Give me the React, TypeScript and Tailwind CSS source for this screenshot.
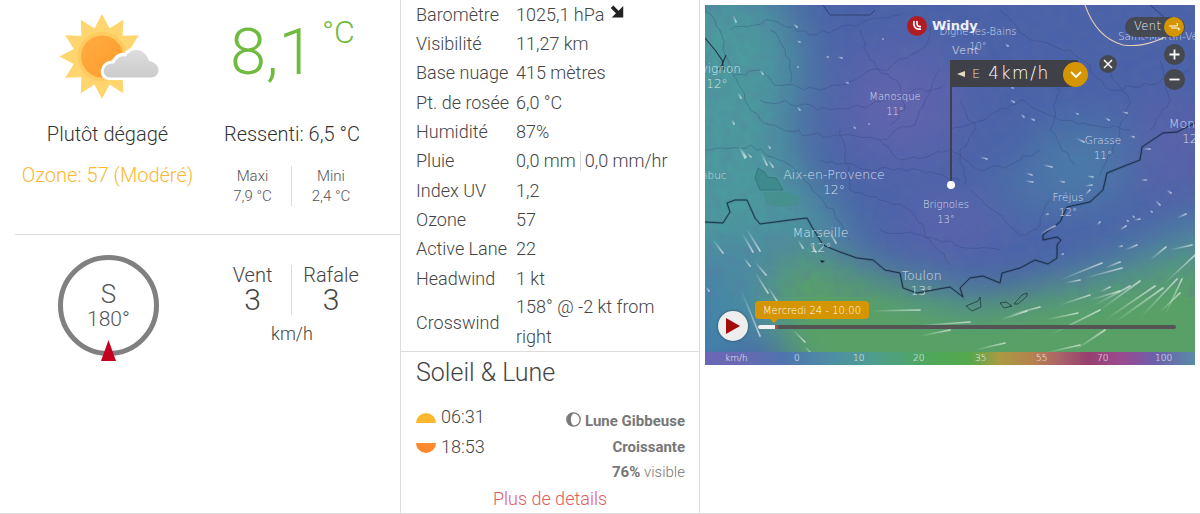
import React from "react";

const sunRays = Array.from({ length: 12 }, (_, i) => i * 30);

function WeatherIcon() {
  return (
    <svg width="120" height="92" viewBox="40 11 120 92" className="block">
      <defs>
        <linearGradient id="orange" x1="0" y1="0" x2="1" y2="1">
          <stop offset="0" stopColor="#ffad40" />
          <stop offset="1" stopColor="#ff9a2e" />
        </linearGradient>
        <linearGradient id="cloud" x1="0" y1="0" x2="0" y2="1">
          <stop offset="0" stopColor="#dddddd" />
          <stop offset="1" stopColor="#cbcbcb" />
        </linearGradient>
      </defs>
      {sunRays.map((a) => (
        <polygon key={a} points="102,14 92,33 112,33" fill="#ffd56f" transform={`rotate(${a} 102 56.5)`} />
      ))}
      <circle cx="102" cy="56.5" r="26" fill="#ffd56f" />
      <circle cx="102" cy="56.5" r="24.5" fill="#ffcb5f" />
      <circle cx="102" cy="56.5" r="21" fill="url(#orange)" />
      <path
        d="M110 78.5 C103 78.5 101 73 103 69 C104 64 109 61.5 113 62 C116 55 122 54 125 54.5 C129 47 144 45 150 60 C156 61 159.5 66 159.5 70 C159.5 75 156 78.5 151 78.5 Z"
        fill="#fff"
        stroke="#fff"
        strokeWidth="3"
      />
      <path
        d="M111 77.5 C105 77.5 103 73 104 69.5 C105 65 110 63 114 63.5 C117 56.5 123 55.5 126 56.5 C130 48 144 46 149 61 C155 62 158.5 66 158.5 70 C158.5 74.5 155 77.5 151 77.5 Z"
        fill="url(#cloud)"
      />
    </svg>
  );
}

const streaks: [number, number, number, number][] = [
  [733, 15, 736, 22], [793, 24, 797, 27], [797, 41, 800, 42], [826, 56, 828, 57], [838, 57, 842, 58],
  [760, 70, 763, 74], [797, 66, 798, 67], [738, 93, 741, 98], [797, 107, 800, 110], [732, 120, 734, 124],
  [853, 126, 855, 128], [868, 123, 869, 124], [768, 145, 770, 148], [742, 150, 746, 157], [747, 153, 751, 157],
  [739, 146, 745, 158], [761, 153, 767, 165], [768, 160, 773, 167], [845, 82, 848, 83], [882, 38, 883, 39],
  [1005, 44, 1008, 46], [1010, 87, 1013, 88], [1010, 100, 1014, 102], [1021, 114, 1024, 117], [1030, 118, 1034, 120],
  [1075, 113, 1078, 114], [1105, 118, 1109, 120], [1122, 112, 1127, 113], [1076, 138, 1084, 142], [1130, 136, 1134, 137],
  [1143, 149, 1150, 149], [1043, 165, 1052, 167], [980, 157, 987, 159], [1026, 173, 1032, 175], [1025, 181, 1033, 182],
  [1059, 181, 1064, 182], [1087, 176, 1093, 177], [1085, 186, 1092, 185], [1141, 180, 1146, 180],
  [742, 233, 753, 252], [746, 228, 760, 251], [744, 258, 750, 266], [755, 262, 766, 275], [755, 272, 768, 293],
  [768, 287, 777, 301], [713, 240, 723, 253], [706, 287, 709, 291], [741, 290, 760, 336], [793, 330, 805, 342],
  [805, 347, 812, 354], [829, 231, 836, 243], [798, 240, 803, 248], [810, 243, 816, 252],
  [1065, 283, 1080, 280], [1040, 234, 1055, 226], [1060, 280, 1102, 263], [1085, 278, 1122, 268], [1100, 310, 1140, 281],
  [1060, 305, 1090, 295], [1095, 305, 1130, 286], [1100, 292, 1110, 287], [1115, 322, 1163, 288], [1105, 320, 1155, 286],
  [1140, 318, 1177, 279], [1165, 315, 1182, 279], [1160, 312, 1180, 293], [1165, 283, 1195, 255], [1170, 250, 1192, 245],
  [1150, 260, 1166, 247], [1125, 250, 1137, 245], [1105, 268, 1120, 262], [1090, 300, 1120, 291],
  [1010, 315, 1040, 307], [1000, 320, 1027, 311], [1045, 320, 1078, 313], [1050, 335, 1100, 310], [1075, 350, 1105, 330],
  [915, 326, 970, 322], [870, 311, 920, 310], [920, 336, 950, 330], [1045, 353, 1080, 345], [975, 350, 1005, 343],
  [1120, 230, 1126, 226], [1132, 215, 1134, 217], [1155, 200, 1160, 205], [1126, 220, 1128, 221], [1150, 210, 1152, 212],
  [1177, 218, 1186, 214], [1134, 220, 1140, 219], [1167, 190, 1171, 193], [1097, 225, 1100, 222], [1085, 195, 1090, 190],
  [1118, 247, 1122, 246], [1045, 215, 1048, 214], [1061, 255, 1063, 254],
];

let seed = 7;
function rnd() {
  seed = (seed * 16807) % 2147483647;
  return seed / 2147483647 - 0.5;
}
function jag(pts: number[][]) {
  let d = `M${pts[0][0]} ${pts[0][1]}`;
  for (let i = 1; i < pts.length; i++) {
    const [a, b] = pts[i - 1];
    const [c, e] = pts[i];
    const n = Math.max(2, Math.round(Math.hypot(c - a, e - b) / 6));
    for (let k = 1; k <= n; k++) {
      const t = k / n;
      const j = k === n ? 0 : 5;
      d += ` L${(a + (c - a) * t + rnd() * j).toFixed(1)} ${(b + (e - b) * t + rnd() * j).toFixed(1)}`;
    }
  }
  return d;
}

const rivers = [
  [[705, 5], [720, 30], [725, 55], [733, 75], [760, 70], [775, 85], [820, 90], [850, 82], [870, 70], [890, 68], [920, 50], [935, 25]],
  [[733, 75], [745, 100], [770, 125], [810, 135], [850, 135], [880, 140], [895, 130], [915, 125], [925, 100], [940, 70]],
  [[760, 100], [800, 105], [830, 110], [870, 105], [905, 95], [945, 85]],
  [[705, 150], [750, 145], [790, 165], [812, 190], [835, 215], [850, 240]],
  [[840, 130], [845, 155], [850, 190], [880, 200], [910, 210], [930, 240], [950, 265]],
  [[880, 140], [900, 160], [950, 150], [980, 170], [1010, 165], [1040, 150]],
  [[950, 130], [990, 115], [1020, 100], [1060, 120], [1090, 125], [1130, 130]],
  [[1000, 10], [1030, 40], [1070, 50], [1110, 90], [1150, 85], [1190, 70]],
  [[970, 190], [1000, 215], [1020, 235], [1040, 225], [1050, 200]],
  [[730, 30], [770, 20], [810, 35], [850, 25], [900, 15]],
  [[820, 160], [870, 170], [920, 170], [960, 180]],
  [[880, 230], [920, 235], [955, 245], [1000, 250]],
  [[860, 30], [870, 60], [900, 85], [905, 110], [890, 125]],
  [[960, 100], [975, 130], [960, 150], [965, 185]],
  [[1030, 60], [1060, 90], [1050, 130], [1075, 165]],
  [[1100, 60], [1130, 100], [1120, 135], [1100, 175]],
  [[770, 30], [790, 60], [790, 85]],
  [[1160, 60], [1170, 100], [1150, 130]],
].map(jag);

const coast =
  "705,222 723,223 730,212 727,203 735,200 747,200 755,218 760,224 790,220 807,218 815,232 823,245 840,252 857,258 873,260 885,270 900,273 903,288 917,293 933,290 950,287 963,297 960,288 970,278 983,276 1000,283 1002,273 1020,268 1035,260 1048,264 1057,258 1057,245 1061,240 1057,237 1043,240 1043,235 1060,222 1067,207 1090,202 1103,190 1107,173 1127,165 1140,160 1142,147 1163,133 1177,132 1195,123";

const labels: { x: number; y: number; name: string; temp: string; size: string }[] = [
  { x: 895, y: 96, name: "Manosque", temp: "11°", size: "text-[10px]" },
  { x: 834, y: 174, name: "Aix-en-Provence", temp: "12°", size: "text-[12.5px]" },
  { x: 946, y: 204, name: "Brignoles", temp: "13°", size: "text-[10px]" },
  { x: 820.5, y: 232, name: "Marseille", temp: "12°", size: "text-[12.5px]" },
  { x: 921.5, y: 275, name: "Toulon", temp: "13°", size: "text-[12.5px]" },
  { x: 1068, y: 197, name: "Fréjus", temp: "12°", size: "text-[10.5px]" },
  { x: 1103, y: 140, name: "Grasse", temp: "11°", size: "text-[10.5px]" },
  { x: 717, y: 69, name: "Avignon", temp: "12°", size: "text-[12px]" },
  { x: 1193, y: 123, name: "Monaco", temp: "12°", size: "text-[12.5px]" },
  { x: 978, y: 31, name: "Digne-les-Bains", temp: "10°", size: "text-[10px]" },
  { x: 1172, y: 36, name: "Saint-Martin-Vésubie", temp: "4°", size: "text-[10.5px]" },
];

function MapArt() {
  return (
    <svg viewBox="705 5 490 360" width="490" height="360" className="absolute inset-0">
      <defs>
        <filter id="b1" x="-50%" y="-50%" width="200%" height="200%"><feGaussianBlur stdDeviation="24" /></filter>
        <filter id="b2" x="-50%" y="-50%" width="200%" height="200%"><feGaussianBlur stdDeviation="20" /></filter>
        <filter id="noise" x="0" y="0" width="100%" height="100%">
          <feTurbulence type="fractalNoise" baseFrequency="0.09" numOctaves="3" seed="4" />
          <feColorMatrix values="0 0 0 0 0.12  0 0 0 0 0.16  0 0 0 0 0.36  0 0 0 1.6 -0.55" />
        </filter>
        {streaks.map(([a, b, c, d], i) => (
          <linearGradient key={i} id={`s${i}`} gradientUnits="userSpaceOnUse" x1={a} y1={b} x2={c} y2={d}>
            <stop offset="0" stopColor="#fff" stopOpacity="0" />
            <stop offset="1" stopColor="#fff" stopOpacity="0.6" />
          </linearGradient>
        ))}
      </defs>
      <rect x="705" y="5" width="490" height="360" fill="#4a62a9" />
      <g filter="url(#b1)">
        <polygon points="660,-20 775,-20 805,60 790,130 810,190 860,240 660,280" fill="#4b9a9e" />
        <ellipse cx="900" cy="105" rx="60" ry="55" fill="#6163ae" />
        <ellipse cx="950" cy="225" rx="50" ry="22" fill="#6063ae" />
        <ellipse cx="1060" cy="190" rx="70" ry="14" fill="#4a84a8" />
        <ellipse cx="1080" cy="150" rx="50" ry="20" fill="#4884a8" />
        <ellipse cx="1175" cy="140" rx="40" ry="40" fill="#5a61aa" />
        <ellipse cx="1170" cy="195" rx="50" ry="16" fill="#5263a8" />
      </g>
      <g filter="url(#b2)">
        <polygon points="690,260 800,225 880,270 1000,295 1100,262 1230,205 1230,400 800,400 780,350 690,310" fill="#4a92a0" opacity="0.85" />
        <polygon points="790,250 880,280 960,305 1090,285 1230,245 1230,400 810,400 780,340 770,290" fill="#59a066" />
        <ellipse cx="712" cy="330" rx="26" ry="45" fill="#4288aa" />
      </g>
      <polygon points={`${coast} 1195,5 705,5`} fill="#000" filter="url(#noise)" opacity="0.28" />
      <g fill="none" stroke="#2f3d70" strokeWidth="0.6" opacity="0.5">
        {rivers.map((d) => <path key={d} d={d} />)}
      </g>
      <path d="M705 38 L715 50 L722 60 L724 70 M726 55 L722 65 L718 70" fill="none" stroke="#1f3340" strokeWidth="1.1" />
      <path d="M823 5 L830 15 L870 15 L875 10 M1150 5 L1165 18 L1172 17" fill="none" stroke="#283a66" strokeWidth="0.8" />
      <path d="M755 178 L758 168 L764 172 L768 177 L776 178 L783 190 L760 190 Z" fill="#3f8a8e" stroke="#2e666c" strokeWidth="0.6" />
      <path d="M763 192 L785 191 L800 196 L797 205 L780 207 L766 205 Z" fill="#45908a" opacity="0.7" />
      <polyline points={coast} fill="none" stroke="#1e3050" strokeWidth="2.5" opacity="0.18" />
      <polyline points={coast} fill="none" stroke="#14253a" strokeWidth="0.9" opacity="0.95" />
      <g fill="none" stroke="#1d3a3a" strokeWidth="0.8">
        <path d="M966 306 L978 301 L980 297 L981 307 L972 311 Z" />
        <path d="M1000 303 L1006 302 L1012 306 L1004 308 Z" />
        <path d="M1014 304 L1022 295 L1027 293 L1027 296 L1018 304 Z" />
      </g>
      <path d="M820 260 L825 261 L822 263 Z" fill="#14253a" />
      <path d="M1085 5 C1092 25 1105 40 1123 45 C1145 48 1165 38 1177 30" fill="none" stroke="#e3ccb5" strokeWidth="1.1" />
      {streaks.map(([a, b, c, d], i) => (
        <line key={i} x1={a} y1={b} x2={c} y2={d} stroke={`url(#s${i})`} strokeWidth={1.7} strokeLinecap="round" />
      ))}
    </svg>
  );
}

function WindyMap() {
  return (
    <div className="relative ml-[5px] mt-[5px] h-[360px] w-[490px] overflow-hidden font-['DejaVu_Sans',sans-serif] text-white">
      <MapArt />
      {labels.map((l) => (
        <div
          key={l.name}
          className={`absolute -translate-x-1/2 whitespace-nowrap text-center leading-[15px] text-white/75 ${l.size}`}
          style={{ left: l.x - 705, top: l.y - 12 }}
        >
          <div>{l.name}</div>
          <div>{l.temp}</div>
        </div>
      ))}
      <div className="absolute left-[-20px] top-[163px] text-[10.5px] text-white/70">Lambuc</div>

      <div className="absolute left-[202px] top-[11px] flex items-center gap-[5px]">
        <span className="flex h-[20px] w-[20px] items-center justify-center rounded-full bg-[#b01c24]">
          <svg width="12" height="12" viewBox="0 0 12 12" fill="none" stroke="#fff" strokeWidth="1.6">
            <path d="M3 1 C2 6 4 10 10 9 M6 1 C5.5 5 6.5 7 10 6.5" />
          </svg>
        </span>
        <span className="text-[13px] font-bold text-white/90">Windy</span>
      </div>

      <div className="absolute left-[247px] top-[38px] text-[11px] tracking-[0.5px] text-white/85">Vent</div>

      <div className="absolute left-[245px] top-[55px] h-[125px] w-[2px] bg-[#40404a]" />
      <div className="absolute left-[242px] top-[176px] h-[8px] w-[8px] rounded-full bg-white" />
      <div className="absolute left-[245px] top-[55px] flex h-[27px] w-[128px] items-center bg-[#404049] pl-[7px]">
        <span className="h-0 w-0 border-y-[3px] border-r-[8px] border-y-transparent border-r-[#e6dcc0]" />
        <span className="ml-[7px] text-[13px] text-[#e6dcc0]">E</span>
        <span className="ml-[8px] text-[17px] tracking-[1.6px] text-white">4km/h</span>
      </div>
      <div className="absolute left-[358px] top-[57px] flex h-[25px] w-[25px] items-center justify-center rounded-full bg-[#d49500]">
        <svg width="14" height="9" viewBox="0 0 14 9" fill="none" stroke="#fff" strokeWidth="1.8"><path d="M2 2 L7 7 L12 2" /></svg>
      </div>
      <div className="absolute left-[394px] top-[50px] flex h-[18px] w-[18px] items-center justify-center rounded-full bg-[#45484f]">
        <svg width="10" height="10" viewBox="0 0 10 10" stroke="#fff" strokeWidth="1.5"><path d="M1 1 L9 9 M9 1 L1 9" /></svg>
      </div>

      <div className="absolute left-[420px] top-[12px] flex h-[20px] w-[60px] items-center rounded-full bg-[#45484f]/95 pl-[9px] text-[11.5px] tracking-[0.4px] text-[#eee]">Vent</div>
      <div className="absolute left-[459px] top-[12px] flex h-[20px] w-[20px] items-center justify-center rounded-full bg-[#d49500]">
        <svg width="12" height="10" viewBox="0 0 12 10" fill="none" stroke="#fff" strokeWidth="1.2">
          <path d="M1 4 H8 C10 4 10 1.5 8.5 1.5 M3 6 H10 C11.5 6 11.5 8 10 8" />
        </svg>
      </div>
      <div className="absolute left-[459px] top-[39px] flex h-[21px] w-[21px] items-center justify-center rounded-full bg-[#45484f]">
        <svg width="11" height="11" viewBox="0 0 11 11" stroke="#fff" strokeWidth="1.8"><path d="M0.5 5.5 H10.5 M5.5 0.5 V10.5" /></svg>
      </div>
      <div className="absolute left-[459px] top-[64px] flex h-[21px] w-[21px] items-center justify-center rounded-full bg-[#45484f]">
        <svg width="11" height="3" viewBox="0 0 11 3" stroke="#fff" strokeWidth="1.8"><path d="M0.5 1.5 H10.5" /></svg>
      </div>

      <div className="absolute left-[13px] top-[306px] flex h-[30px] w-[30px] items-center justify-center rounded-full bg-[#eeeeee] shadow-[0_0_3px_#0006]">
        <svg width="14" height="16" viewBox="0 0 14 16"><path d="M0 0 L14 8 L0 16 Z" fill="#a30a0a" /></svg>
      </div>
      <div className="absolute left-[53px] top-[320px] flex h-[4px] w-[418px] overflow-hidden rounded-full bg-[#545454]">
        <span className="h-full w-[17px] bg-[#f0f0f0]" />
        <span className="h-full w-[3px] bg-[#a05040]" />
      </div>
      <div className="absolute left-[50px] top-[296px] flex h-[18px] w-[114px] items-center justify-center rounded-[4px] bg-[#d49500] text-[10px] text-white">
        Mercredi 24 - 10:00
      </div>
      <div className="absolute left-[65px] top-[314px] h-0 w-0 border-x-[4px] border-t-[4px] border-x-transparent border-t-[#d49500]" />

      <div className="absolute bottom-0 left-0 flex h-[13px] w-[490px] items-center bg-[linear-gradient(90deg,#6a68b4_0%,#6a68b4_6%,#4f74ae_16%,#4e8fa4_26%,#4f9d90_34%,#4fa85a_46%,#55a84c_54%,#a99a42_60%,#b5824e_67%,#a8606a_73%,#97406e_78%,#9a4a90_85%,#6c60aa_92%,#5a8aa8_100%)] text-[9px] text-white/90">
        <span className="absolute left-[20px]">km/h</span>
        <span className="absolute left-[89px]">0</span>
        <span className="absolute left-[148px]">10</span>
        <span className="absolute left-[208px]">20</span>
        <span className="absolute left-[270px]">35</span>
        <span className="absolute left-[331px]">55</span>
        <span className="absolute left-[392px]">70</span>
        <span className="absolute left-[450px]">100</span>
      </div>
    </div>
  );
}

const rows: [string, React.ReactNode][] = [
  [
    "Baromètre",
    <span className="flex items-center gap-[6px]">
      1025,1 hPa
      <svg width="14" height="13" viewBox="0 0 13 12.5" className="-mt-[5px]">
        <path d="M0.5 3 L3 0.5 L8 5.5 L12.5 1 V12 H1.5 L5.5 8 Z" fill="#222" />
      </svg>
    </span>,
  ],
  ["Visibilité", "11,27 km"],
  ["Base nuage", "415 mètres"],
  ["Pt. de rosée", "6,0 °C"],
  ["Humidité", "87%"],
  [
    "Pluie",
    <span className="flex items-center">
      0,0 mm
      <span className="mx-[4px] h-[20px] w-px bg-[#ddd]" />
      0,0 mm/hr
    </span>,
  ],
  ["Index UV", "1,2"],
  ["Ozone", "57"],
  ["Active Lane", "22"],
  ["Headwind", "1 kt"],
];

export default function App() {
  return (
    <div className="relative flex h-[514px] w-[1200px] overflow-hidden border-b border-[#dcdcdc] bg-white font-[Roboto,sans-serif] font-light text-[#333]">
      <section className="flex h-full w-[400px] shrink-0 flex-col">
        <div className="ml-[15px] flex h-[235px] flex-col border-b border-[#dcdcdc]">
          <div className="flex h-[111px]">
            <div className="w-[185px] pl-[25px] pt-[11px]">
              <WeatherIcon />
            </div>
            <div className="relative flex-1">
              <span className="absolute left-[30px] top-[12px] text-[65px] leading-[80px] text-[#6fbb3f]">8,1</span>
              <span className="absolute left-[122px] top-[14px] text-[32px] leading-[36px] text-[#6fbb3f]">°C</span>
            </div>
          </div>
          <div className="mt-[9px] flex h-[28px] items-center text-[20px]">
            <span className="w-[185px] text-center">Plutôt dégagé</span>
            <span className="w-[200px] pr-[16px] text-center">Ressenti: 6,5 °C</span>
          </div>
          <div className="mt-[12px] flex items-start">
            <span className="w-[185px] pt-[1px] text-center text-[20px] leading-[28px] text-[#fdb734]">Ozone: 57 (Modéré)</span>
            <div className="flex w-[200px] pt-[6px] text-center text-[15px] leading-[20px] text-[#555]">
              <div className="h-[40px] w-[92px] border-r border-[#dcdcdc] pl-[14px]"><div>Maxi</div><div>7,9 °C</div></div>
              <div className="w-[78px]"><div>Mini</div><div>2,4 °C</div></div>
            </div>
          </div>
        </div>
        <div className="flex flex-1 pl-[15px]">
          <div className="w-[185px] pl-[43px] pt-[20px]">
            <div className="relative flex h-[101px] w-[101px] flex-col items-center rounded-full border-[5px] border-[#808080] text-[#555]">
              <span className="mt-[19px] text-[26px] leading-[30px]">S</span>
              <span className="text-[21px] leading-[20px]">180°</span>
              <svg width="15" height="21" viewBox="0 0 15 21" className="absolute left-[38px] top-[80px]">
                <path d="M7.5 0 L15 21 H0 Z" fill="#c4021f" />
              </svg>
            </div>
          </div>
          <div className="w-[200px] pt-[30px] text-center text-[#444]">
            <div className="flex h-[50px] pl-[14px]">
              <div className="h-[50px] w-[78px] border-r border-[#dcdcdc]">
                <div className="text-[20px] leading-[20px]">Vent</div>
                <div className="text-[30px] leading-[30px]">3</div>
              </div>
              <div className="w-[78px]">
                <div className="text-[20px] leading-[20px]">Rafale</div>
                <div className="text-[30px] leading-[30px]">3</div>
              </div>
            </div>
            <div className="mt-[5px] pr-[16px] text-[18px] leading-[28px]">km/h</div>
          </div>
        </div>
      </section>

      <section className="flex h-full w-[300px] shrink-0 flex-col border-x border-[#dcdcdc] text-[18px] text-[#444]">
        <div className="h-[352px] border-b border-[#dcdcdc] pl-[15px]">
          <div className="-mt-[0.5px]">
            {rows.map(([k, v]) => (
              <div key={k} className="flex h-[29.33px] items-center">
                <span className="w-[100px] shrink-0 whitespace-nowrap">{k}</span>
                <span>{v}</span>
              </div>
            ))}
          </div>
          <div className="-mt-[0.5px] flex items-center">
            <span className="w-[100px] shrink-0">Crosswind</span>
            <span className="leading-[30px]">158° @ -2 kt from<br />right</span>
          </div>
        </div>
        <div className="relative flex-1 pl-[15px]">
          <div className="pt-[5px] text-[25px] leading-[32px]">Soleil &amp; Lune</div>
          <div className="mt-[13px] flex">
            <div className="w-[130px] text-[18px] leading-[30px]">
              <div className="flex items-center gap-[5px]">
                <span className="mt-[2px] h-[10px] w-[20px] rounded-t-full bg-[#fdb72f]" />
                06:31
              </div>
              <div className="flex items-center gap-[5px]">
                <span className="mt-[2px] h-[10px] w-[20px] rounded-b-full bg-[#fe8a2f]" />
                18:53
              </div>
            </div>
            <div className="flex-1 whitespace-nowrap pr-[14px] pt-[6px] text-right text-[15px] font-bold leading-[26px] text-[#777]">
              <div className="flex items-center justify-end gap-[4px]">
                <svg width="15" height="15" viewBox="0 0 15 15" className="-mt-[3px]">
                  <circle cx="7.5" cy="7.5" r="6.7" fill="#fff" stroke="#777" strokeWidth="1.3" />
                  <path d="M7.5 1 A6.5 6.5 0 0 0 7.5 14 A9 9 0 0 1 7.5 1 Z" fill="#777" />
                </svg>
                Lune Gibbeuse
              </div>
              <div>Croissante</div>
              <div className="-mt-[1px]">76% <span className="font-light text-[#777]">visible</span></div>
            </div>
          </div>
          <div className="absolute bottom-[2px] left-0 w-full text-center text-[18px] leading-[24px] text-[#e25c5c]">Plus de details</div>
        </div>
      </section>

      <WindyMap />
    </div>
  );
}
